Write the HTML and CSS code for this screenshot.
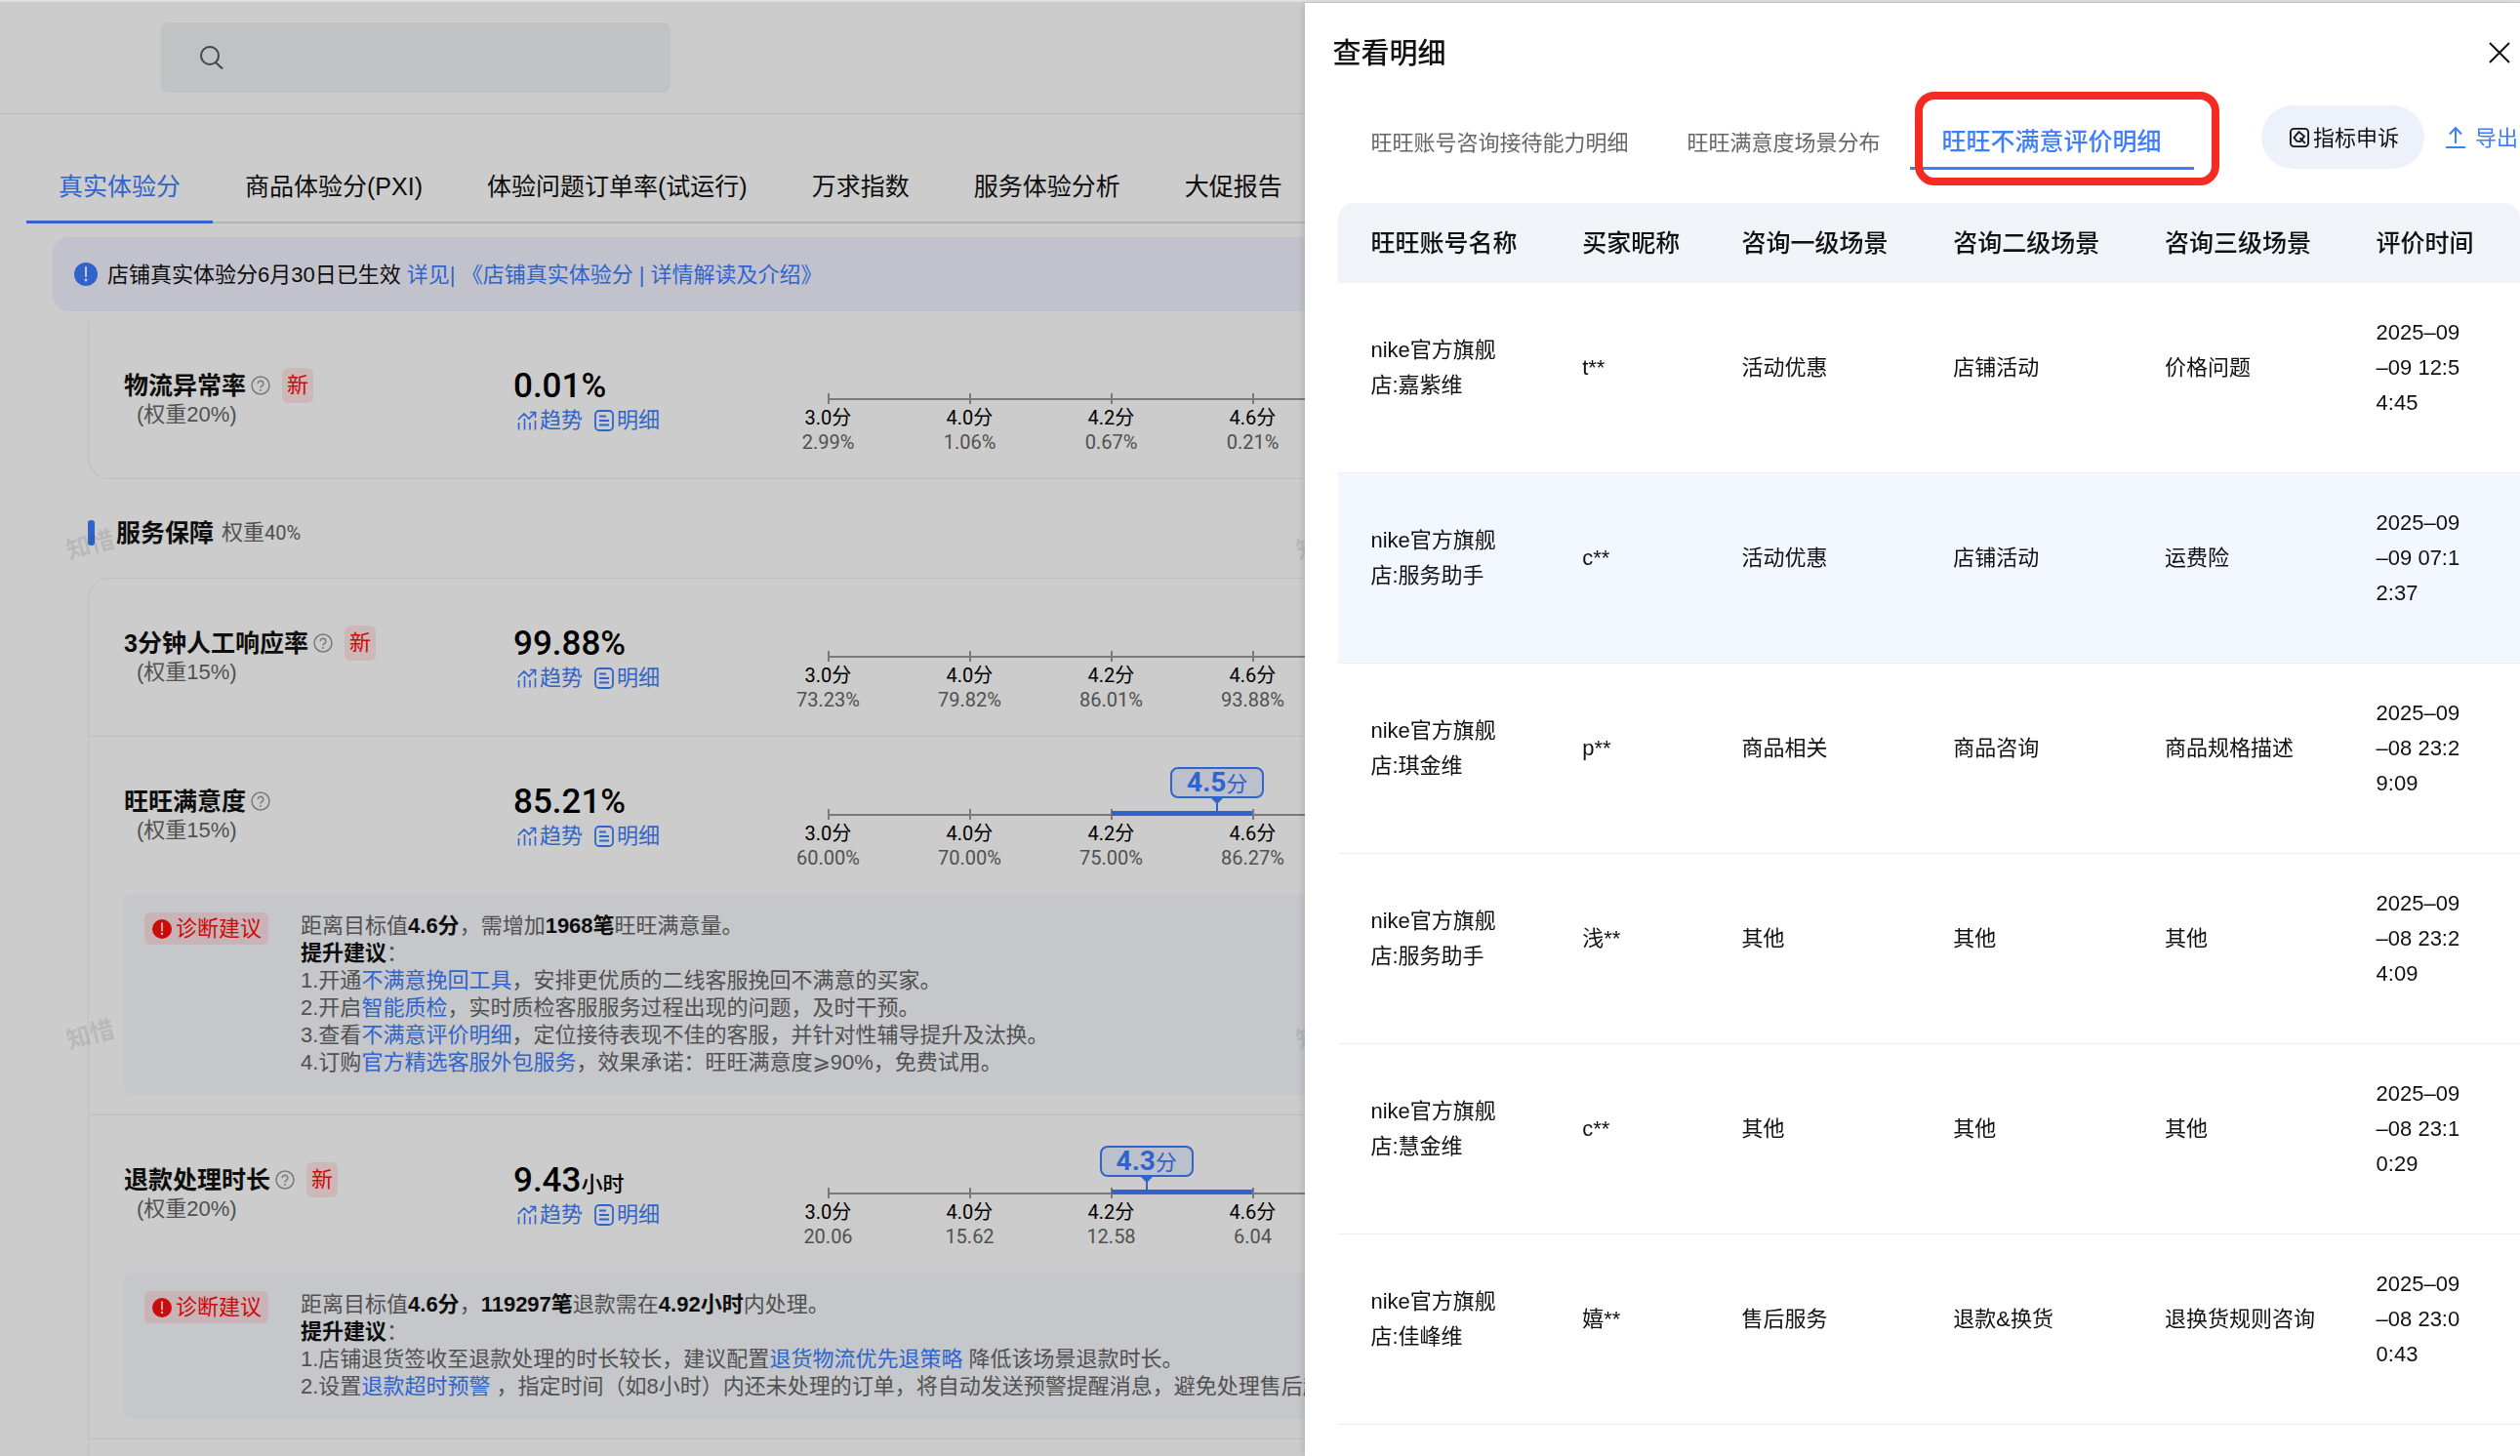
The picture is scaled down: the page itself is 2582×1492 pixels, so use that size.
FILE: index.html
```html
<!DOCTYPE html>
<html lang="zh-CN">
<head>
    <meta charset="UTF-8">
    <meta name="viewport" content="width=device-width, initial-scale=1.0">
    <title>真实体验分</title>
    <link rel="stylesheet" href="styles.css">
</head>
<body>
    <svg class="sprite" aria-hidden="true">
        <symbol id="i-help" viewBox="0 0 20 20">
            <circle cx="10" cy="10" r="9" fill="none" stroke="currentColor" stroke-width="1.5"/>
            <path d="M7.2 8a2.8 2.8 0 1 1 4.4 2.3c-1 .7-1.6 1.1-1.6 2.2" fill="none" stroke="currentColor" stroke-width="1.5"/>
            <circle cx="10" cy="15" r="1" fill="currentColor"/>
        </symbol>
        <symbol id="i-alert" viewBox="0 0 24 24">
            <circle cx="12" cy="12" r="12" fill="currentColor"/>
            <path d="M12 5v9" stroke="#fff" stroke-width="2" stroke-linecap="round"/>
            <circle cx="12" cy="18" r="1.4" fill="#fff"/>
        </symbol>
        <symbol id="i-trend" viewBox="0 0 20 20">
            <path d="M1 9l6-6 5 5 6-6M13 1.5h5.5V7M1.5 12v7.500M7.500 8v11.500M13 12v7.500M18.500 10v9.500" fill="none" stroke="currentColor" stroke-width="1.600"/>
        </symbol>
        <symbol id="i-list" viewBox="0 0 20 22">
            <rect x="1" y="1" width="18" height="20" rx="4" fill="none" stroke="currentColor" stroke-width="1.800"/>
            <path d="M5 6.500h7M5 11h10M5 15.500h10" stroke="currentColor" stroke-width="1.800"/>
        </symbol>
    </svg>

    <div class="page">
        <header class="topbar">
            <label class="search">
                <svg viewBox="0 0 24 24"><circle cx="10" cy="10" r="9"/><path d="M16 17l7 6.500"/></svg>
                <input type="text" aria-label="搜索">
            </label>
        </header>

        <main class="main">
            <nav class="tabs">
                <a class="tab active" href="#">真实体验分</a>
                <a class="tab" href="#">商品体验分(PXI)</a>
                <a class="tab" href="#">体验问题订单率(试运行)</a>
                <a class="tab" href="#">万求指数</a>
                <a class="tab" href="#">服务体验分析</a>
                <a class="tab" href="#">大促报告</a>
            </nav>

            <div class="notice">
                <svg class="notice-icon"><use href="#i-alert"/></svg>
                <p>店铺真实体验分6月30日已生效 <a href="#">详见| 《店铺真实体验分 | 详情解读及介绍》</a></p>
            </div>

            <section class="card card-cut">
                <div class="metric">
                    <div>
                        <h3 class="metric-name">物流异常率<svg><use href="#i-help"/></svg><span class="new">新</span></h3>
                        <p class="weight">(权重20%)</p>
                    </div>
                    <div>
                        <p class="value">0.01%</p>
                        <p class="links"><a href="#"><svg><use href="#i-trend"/></svg>趋势</a><a href="#"><svg><use href="#i-list"/></svg>明细</a></p>
                    </div>
                    <div class="scale">
                        <div class="tick"><b>3.0分</b><span>2.99%</span></div>
                        <div class="tick"><b>4.0分</b><span>1.06%</span></div>
                        <div class="tick"><b>4.2分</b><span>0.67%</span></div>
                        <div class="tick"><b>4.6分</b><span>0.21%</span></div>
                    </div>
                </div>
            </section>

            <h2 class="section-title">服务保障<small>权重<span>40%</span></small></h2>

            <section class="card">
                <div class="metric">
                    <div>
                        <h3 class="metric-name">3分钟人工响应率<svg><use href="#i-help"/></svg><span class="new">新</span></h3>
                        <p class="weight">(权重15%)</p>
                    </div>
                    <div>
                        <p class="value">99.88%</p>
                        <p class="links"><a href="#"><svg><use href="#i-trend"/></svg>趋势</a><a href="#"><svg><use href="#i-list"/></svg>明细</a></p>
                    </div>
                    <div class="scale">
                        <div class="tick"><b>3.0分</b><span>73.23%</span></div>
                        <div class="tick"><b>4.0分</b><span>79.82%</span></div>
                        <div class="tick"><b>4.2分</b><span>86.01%</span></div>
                        <div class="tick"><b>4.6分</b><span>93.88%</span></div>
                    </div>
                </div>

                <div class="metric">
                    <div>
                        <h3 class="metric-name">旺旺满意度<svg><use href="#i-help"/></svg></h3>
                        <p class="weight">(权重15%)</p>
                    </div>
                    <div>
                        <p class="value">85.21%</p>
                        <p class="links"><a href="#"><svg><use href="#i-trend"/></svg>趋势</a><a href="#"><svg><use href="#i-list"/></svg>明细</a></p>
                    </div>
                    <div class="scale">
                        <div class="tick"><b>3.0分</b><span>60.00%</span></div>
                        <div class="tick"><b>4.0分</b><span>70.00%</span></div>
                        <div class="tick"><b>4.2分</b><span>75.00%</span>
                            <div class="range"><div class="score" style="left: 75%"><strong>4.5</strong>分</div></div>
                        </div>
                        <div class="tick"><b>4.6分</b><span>86.27%</span></div>
                    </div>
                    <div class="advice">
                        <span class="advice-tag"><svg><use href="#i-alert"/></svg>诊断建议</span>
                        <div class="advice-text">
                            <p>距离目标值<b>4.6分</b>，需增加<b>1968笔</b>旺旺满意量。</p>
                            <p><b>提升建议</b>：</p>
                            <p>1.开通<a href="#">不满意挽回工具</a>，安排更优质的二线客服挽回不满意的买家。</p>
                            <p>2.开启<a href="#">智能质检</a>，实时质检客服服务过程出现的问题，及时干预。</p>
                            <p>3.查看<a href="#">不满意评价明细</a>，定位接待表现不佳的客服，并针对性辅导提升及汰换。</p>
                            <p>4.订购<a href="#">官方精选客服外包服务</a>，效果承诺：旺旺满意度⩾90%，免费试用。</p>
                        </div>
                    </div>
                </div>

                <div class="metric">
                    <div>
                        <h3 class="metric-name">退款处理时长<svg><use href="#i-help"/></svg><span class="new">新</span></h3>
                        <p class="weight">(权重20%)</p>
                    </div>
                    <div>
                        <p class="value">9.43<small>小时</small></p>
                        <p class="links"><a href="#"><svg><use href="#i-trend"/></svg>趋势</a><a href="#"><svg><use href="#i-list"/></svg>明细</a></p>
                    </div>
                    <div class="scale">
                        <div class="tick"><b>3.0分</b><span>20.06</span></div>
                        <div class="tick"><b>4.0分</b><span>15.62</span></div>
                        <div class="tick"><b>4.2分</b><span>12.58</span>
                            <div class="range"><div class="score" style="left: 25%"><strong>4.3</strong>分</div></div>
                        </div>
                        <div class="tick"><b>4.6分</b><span>6.04</span></div>
                    </div>
                    <div class="advice">
                        <span class="advice-tag"><svg><use href="#i-alert"/></svg>诊断建议</span>
                        <div class="advice-text">
                            <p>距离目标值<b>4.6分</b>，<b>119297笔</b>退款需在<b>4.92小时</b>内处理。</p>
                            <p><b>提升建议</b>：</p>
                            <p>1.店铺退货签收至退款处理的时长较长，建议配置<a href="#">退货物流优先退策略</a> 降低该场景退款时长。</p>
                            <p>2.设置<a href="#">退款超时预警</a> ，指定时间（如8小时）内还未处理的订单，将自动发送预警提醒消息，避免处理售后超</p>
                        </div>
                    </div>
                </div>
                <div class="metric"></div>
            </section>
        </main>

        <span class="watermark wm-1">知惜</span>
        <span class="watermark wm-2">知惜</span>
        <span class="watermark wm-3">知惜</span>
        <span class="watermark wm-4">知惜</span>
    </div>

    <div class="mask"></div>

    <aside class="drawer">
        <div class="drawer-head">
            <h1>查看明细</h1>
            <button class="close" aria-label="关闭"><svg viewBox="0 0 20 20"><path d="M0 0l20 20M20 0L0 20"/></svg></button>
        </div>

        <div class="drawer-bar">
            <nav class="subtabs">
                <a class="subtab" href="#">旺旺账号咨询接待能力明细</a>
                <a class="subtab" href="#">旺旺满意度场景分布</a>
                <a class="subtab active" href="#">旺旺不满意评价明细<i class="marker"></i></a>
            </nav>
            <div class="actions">
                <button class="action appeal">
                    <svg viewBox="0 0 22 22"><rect x="1" y="1" width="20" height="20" rx="4"/><path d="M10.500 4.500l6 5-4.500 6-4-.5-3-4zM11.500 11.500l6 6"/></svg>
                    <span>指标申诉</span>
                </button>
                <button class="action export">
                    <svg viewBox="0 0 20 22"><path d="M10 17V1.500M4 7.500l6-6.500 6 6.500M0 21h20"/></svg>
                    <span>导出</span>
                </button>
            </div>
        </div>

        <table class="detail">
            <colgroup>
                <col class="c-wide"><col class="c-nick"><col class="c-wide"><col class="c-wide"><col class="c-wide"><col>
            </colgroup>
            <thead>
                <tr><th>旺旺账号名称</th><th>买家昵称</th><th>咨询一级场景</th><th>咨询二级场景</th><th>咨询三级场景</th><th>评价时间</th></tr>
            </thead>
            <tbody>
                <tr><td>nike官方旗舰<br>店:嘉紫维</td><td>t**</td><td>活动优惠</td><td>店铺活动</td><td>价格问题</td><td>2025–09<br>–09 12:5<br>4:45</td></tr>
                <tr class="hover"><td>nike官方旗舰<br>店:服务助手</td><td>c**</td><td>活动优惠</td><td>店铺活动</td><td>运费险</td><td>2025–09<br>–09 07:1<br>2:37</td></tr>
                <tr><td>nike官方旗舰<br>店:琪金维</td><td>p**</td><td>商品相关</td><td>商品咨询</td><td>商品规格描述</td><td>2025–09<br>–08 23:2<br>9:09</td></tr>
                <tr><td>nike官方旗舰<br>店:服务助手</td><td>浅**</td><td>其他</td><td>其他</td><td>其他</td><td>2025–09<br>–08 23:2<br>4:09</td></tr>
                <tr><td>nike官方旗舰<br>店:慧金维</td><td>c**</td><td>其他</td><td>其他</td><td>其他</td><td>2025–09<br>–08 23:1<br>0:29</td></tr>
                <tr><td>nike官方旗舰<br>店:佳峰维</td><td>嬉**</td><td>售后服务</td><td>退款&amp;换货</td><td>退换货规则咨询</td><td>2025–09<br>–08 23:0<br>0:43</td></tr>
            </tbody>
        </table>
    </aside>
</body>
</html>
```
FILE: styles.css
```css
* {
    box-sizing: border-box;
}
body {
    margin: 0;
    padding-top: 2px;
    height: 100vh;
    overflow: hidden;
    background: #e1e2e0;
    color: #111;
    font-family: "Liberation Sans", "Noto Sans CJK SC", "DejaVu Sans", sans-serif;
    font-size: 22px;
}
h1, h2, h3, p {
    margin: 0;
}
a {
    color: #3d7eff;
    text-decoration: none;
}
button {
    border: none;
    background: none;
    padding: 0;
    font: inherit;
    color: inherit;
    cursor: pointer;
}
.sprite {
    display: none;
}

/* page behind the drawer */
.page {
    position: relative;
    height: 100%;
    overflow: hidden;
    background: #fff;
}
.topbar {
    height: 115px;
    padding: 21px 0 0 165px;
    border-bottom: 1px solid #e6e8f1;
}
.search {
    display: flex;
    align-items: center;
    gap: 16px;
    width: 522px;
    height: 72px;
    padding-left: 40px;
    border-radius: 8px;
    background: #f2f3f6;
}
.search svg {
    width: 24px;
    height: 24px;
    fill: none;
    stroke: #555;
    stroke-width: 2;
}
.search input {
    flex: 1;
    border: none;
    outline: none;
    background: none;
    font: inherit;
}
.main {
    margin-left: 27px;
}
.tabs {
    display: flex;
    padding-top: 40px;
    box-shadow: inset 0 -2px #e0e0e7;
    white-space: nowrap;
}
.tab {
    padding: 0 33px;
    border-bottom: 3px solid transparent;
    color: #111;
    font-size: 25px;
    line-height: 69px;
}
.tab.active {
    border-color: #3d7eff;
    color: #3d7eff;
}
.notice {
    display: flex;
    align-items: center;
    gap: 10px;
    height: 76px;
    margin: 14px 0 0 27px;
    padding-left: 22px;
    border-radius: 16px;
    background: #f3f3ff;
}
.notice p {
    padding-bottom: 4px;
}
.notice-icon {
    width: 24px;
    height: 24px;
    color: #3d7eff;
}
.card {
    margin-left: 63px;
    border: 1px solid #efefef;
    border-radius: 22px;
}
.card-cut {
    margin-top: 10px;
    border-top: none;
    border-radius: 0 0 22px 22px;
}
.metric {
    display: grid;
    grid-template-columns: 398px 251px 1fr;
    grid-template-rows: 161px;
    padding-left: 36px;
}
.metric + .metric {
    border-top: 1px solid #efefef;
}
.metric > div {
    padding-top: 48px;
}
.metric-name {
    display: flex;
    align-items: center;
    font-size: 25px;
    line-height: 36px;
}
.metric-name svg {
    width: 20px;
    height: 20px;
    margin: 0 12px 0 5px;
    color: #999;
}
.new {
    width: 32px;
    border-radius: 6px;
    background: #ffe6e6;
    color: #ff0f0f;
    font-size: 22px;
    font-weight: 400;
    text-align: center;
}
.weight {
    padding-left: 13px;
    color: #666;
    line-height: 24px;
}
.value {
    height: 36px;
    padding-left: 1px;
    color: #000;
    font-family: Roboto, "Noto Sans CJK SC", sans-serif;
    font-size: 35px;
    font-weight: 500;
    line-height: 38px;
}
.value small {
    font-size: 22px;
    line-height: 1;
}
.links {
    display: flex;
    gap: 12px;
    padding-left: 5px;
    line-height: 36px;
}
.links a {
    display: flex;
    align-items: center;
    gap: 3px;
}
.links svg {
    width: 20px;
    height: 22px;
}

/* score axis */
.metric > .scale {
    position: relative;
    display: flex;
    padding-top: 74px;
    font-family: Roboto, "Noto Sans CJK SC", sans-serif;
    font-size: 20px;
}
.scale::before {
    content: "";
    position: absolute;
    top: 79px;
    left: 72px;
    right: 0;
    height: 2px;
    background: #999;
}
.tick {
    position: relative;
    display: flex;
    flex-direction: column;
    align-items: center;
    width: 145px;
    color: #666;
    line-height: 26px;
}
.tick::before {
    content: "";
    width: 2px;
    height: 11px;
    margin-bottom: 2px;
    background: #999;
}
.tick b {
    color: #000;
    font-weight: 400;
    line-height: 24px;
}
.range {
    position: absolute;
    top: 2px;
    left: 50%;
    width: 100%;
    height: 5px;
    background: #3d7eff;
}
.score {
    position: absolute;
    bottom: 18px;
    width: 96px;
    height: 32px;
    margin-left: -48px;
    border: 2px solid #3d7eff;
    border-radius: 8px;
    background: #ebf0ff;
    color: #3d7eff;
    font-size: 22px;
    line-height: 28px;
    text-align: center;
}
.score strong {
    font-size: 28px;
}
.score::before {
    content: "";
    position: absolute;
    top: 29px;
    left: 39px;
    border: 7px solid transparent;
    border-top-color: #3d7eff;
    border-bottom: none;
}
.score::after {
    content: "";
    position: absolute;
    top: 30px;
    left: 45px;
    width: 2px;
    height: 14px;
    background: #3d7eff;
}

/* diagnosis box */
.metric > .advice {
    grid-column: 1 / -1;
    display: flex;
    align-items: flex-start;
    gap: 33px;
    margin-bottom: 20px;
    padding: 19px 0 19px 21px;
    border-radius: 8px;
    background: #f7f9fe;
}
.advice-tag {
    display: flex;
    align-items: center;
    gap: 4px;
    flex: none;
    padding: 0 7px 0 8px;
    border-radius: 6px;
    background: #fbe0e4;
    color: #ff0f0f;
    line-height: 33px;
}
.advice-tag svg {
    width: 20px;
    height: 20px;
}
.advice-text {
    color: #666;
    line-height: 28px;
    white-space: nowrap;
}
.advice-text b {
    color: #111;
}
.section-title {
    display: flex;
    align-items: center;
    margin: 37px 0 28px 63px;
    font-size: 25px;
    line-height: 36px;
}
.section-title::before {
    content: "";
    width: 7px;
    height: 26px;
    margin-right: 22px;
    border-radius: 3px;
    background: #3d7eff;
}
.section-title small {
    margin-left: 8px;
    color: #666;
    font-size: 22px;
    font-weight: 400;
}
.section-title small span {
    font-family: Roboto, sans-serif;
    font-size: 20px;
}
.watermark {
    position: absolute;
    color: rgba(0, 0, 0, .1);
    font-size: 25px;
    font-weight: 700;
    transform: rotate(-15deg);
}
.wm-1 {
    top: 536px;
    left: 67px;
}
.wm-2 {
    top: 1038px;
    left: 67px;
}
.wm-3 {
    top: 536px;
    left: 1327px;
}
.wm-4 {
    top: 1038px;
    left: 1327px;
}
.mask {
    position: fixed;
    inset: 2px 0 0;
    background: rgba(0, 0, 0, .2);
}

/* drawer */
.drawer {
    position: fixed;
    top: 3px;
    right: 0;
    bottom: 0;
    width: 48.2%;
    padding-left: 34px;
    background: #fff;
    box-shadow: -2px 0 8px rgba(0, 0, 0, .12);
}
.drawer-head {
    display: flex;
    align-items: center;
    justify-content: space-between;
    height: 102px;
    padding-right: 11px;
}
.drawer-head h1 {
    margin-left: -6px;
    padding-bottom: 4px;
    font-size: 29px;
    font-weight: 500;
}
.close svg {
    display: block;
    width: 20px;
    height: 20px;
    overflow: visible;
    fill: none;
    stroke: #111;
    stroke-width: 2;
}
.drawer-bar {
    display: flex;
    justify-content: space-between;
    height: 103px;
    white-space: nowrap;
}
.subtabs {
    display: flex;
    align-items: flex-start;
    padding-left: 3px;
}
.subtab {
    position: relative;
    padding: 16px 30px 0;
    color: #666;
    line-height: 52px;
}
.subtab.active {
    padding: 14px 33px 0;
    border-bottom: 3px solid #3d7eff;
    color: #3d7eff;
    font-size: 25px;
    font-weight: 500;
}
.marker {
    position: absolute;
    top: -11px;
    left: 5px;
    right: -26px;
    height: 96px;
    border: 8px solid #f42b22;
    border-radius: 20px;
}
.actions {
    display: flex;
    align-items: flex-start;
    gap: 22px;
    padding: 3px 2px 0 0;
}
.action {
    display: flex;
    align-items: center;
    gap: 10px;
    height: 65px;
}
.action svg {
    width: 20px;
    height: 22px;
    fill: none;
    stroke: currentColor;
    stroke-width: 2;
}
.action span {
    padding-bottom: 4px;
}
.appeal {
    gap: 4px;
    padding: 0 26px 0 29px;
    border-radius: 33px;
    background: #edf1fa;
}
.export {
    color: #3d7eff;
}
.detail {
    width: 100%;
    border-collapse: separate;
    border-spacing: 0;
    table-layout: fixed;
    text-align: left;
}
.c-wide {
    width: 17.9%;
}
.c-nick {
    width: 13.5%;
}
.detail th {
    height: 82px;
    padding: 0 0 5px 33px;
    background: #f2f3f8;
    font-size: 25px;
    font-weight: 500;
    white-space: nowrap;
}
.detail th:first-child {
    border-top-left-radius: 16px;
}
.detail th:last-child {
    border-top-right-radius: 16px;
}
.detail td {
    padding: 33px 0 53px 33px;
    border-bottom: 1px solid #eee;
    line-height: 36px;
}
.detail .hover td {
    background: #f3f7ff;
}
```
